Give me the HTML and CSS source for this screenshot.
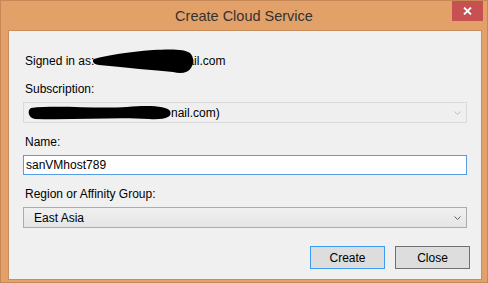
FILE: index.html
```html
<!DOCTYPE html>
<html lang="en">
<head>
    <meta charset="UTF-8">
    <meta name="viewport" content="width=device-width, initial-scale=1.0">
    <title>Create Cloud Service</title>
    <link rel="stylesheet" href="styles.css">
</head>
<body>
    <div class="window">
        <div class="titlebar">
            <span></span>
            <span class="title">Create Cloud Service</span>
            <button class="close-x" title="Close">
                <svg width="9" height="8" viewBox="0 0 9 8"><path d="M1 0.5 L8 7.5 M8 0.5 L1 7.5" stroke="#fff" stroke-width="1.8"/></svg>
            </button>
        </div>
        <div class="client">
            <div class="signed">
                <span>Signed in as:</span>
                <svg class="blob blob-signed" width="101" height="25" viewBox="0 0 101 25">
                    <path d="M1 10 C15 6 35 3 60 1 C78 0 92 0 97 4 C101 8 101 14 98 19 C95 24 88 25 80 23 C60 21 35 19 6 16 C-1 15 -1 11 1 10 Z" fill="#000"/>
                </svg>
                <span>ail.com</span>
            </div>

            <div class="field">
                <label>Subscription:</label>
                <div class="combo disabled">
                    <svg class="blob blob-sub" width="146" height="16" viewBox="0 0 146 16">
                        <path d="M4 3 C30 0 70 4 100 2 C122 0 140 1 143 6 C146 12 138 15 122 14 C90 12 50 15 8 14 C1 13 0 5 4 3 Z" fill="#000"/>
                    </svg>
                    <span class="combo-text">nail.com)</span>
                    <svg class="chev" width="7" height="4" viewBox="0 0 7 4"><path d="M0.5 0.5 L3.5 3.5 L6.5 0.5" fill="none" stroke="#bcbcbc"/></svg>
                </div>
            </div>

            <div class="field">
                <label for="name">Name:</label>
                <input id="name" class="textbox" type="text" value="sanVMhost789">
            </div>

            <div class="field">
                <label>Region or Affinity Group:</label>
                <div class="combo">
                    <span class="combo-text region">East Asia</span>
                    <svg class="chev" width="7" height="4" viewBox="0 0 7 4"><path d="M0.5 0.5 L3.5 3.5 L6.5 0.5" fill="none" stroke="#606060"/></svg>
                </div>
            </div>

            <div class="buttons">
                <button class="btn default">Create</button>
                <button class="btn">Close</button>
            </div>
        </div>
    </div>
</body>
</html>
```

FILE: styles.css
```css
body {
    margin: 0;
    padding: 0;
    font-family: "Liberation Sans", Arial, sans-serif;
    font-size: 12px;
    color: #000;
}
.window {
    width: 488px;
    height: 283px;
    box-sizing: border-box;
    background-color: #e2a168;
    border: 1px solid #c68856;
    display: flex;
    flex-direction: column;
}
.titlebar {
    height: 29px;
    display: grid;
    grid-template-columns: 1fr auto 1fr;
    align-items: start;
}
.title {
    font-family: "Liberation Sans", Arial, sans-serif;
    font-size: 14.5px;
    color: #333;
    padding-top: 7px;
}
.close-x {
    justify-self: end;
    width: 31px;
    height: 20px;
    margin-right: 4px;
    border: 0;
    padding: 0;
    background-color: #c75050;
    display: flex;
    align-items: center;
    justify-content: center;
}
.client {
    flex-grow: 1;
    margin: 0 5px 2px 7px;
    background-color: #f0f0f0;
    border: 1px solid #c98d5c;
    padding: 0 14px;
    display: flex;
    flex-direction: column;
}
.signed {
    margin-top: 17px;
    height: 25px;
    display: flex;
    align-items: center;
    padding-left: 2px;
}
.blob-signed {
    margin-left: -1px;
    margin-right: -7px;
    position: relative;
    top: 1px;
}
.field {
    display: flex;
    flex-direction: column;
}
.field label {
    line-height: 16px;
    padding-left: 2px;
    margin-bottom: 5px;
}
.signed + .field {
    margin-top: 8px;
}
.field + .field {
    margin-top: 11px;
}
.combo {
    height: 21px;
    box-sizing: border-box;
    border: 1px solid #acacac;
    background: linear-gradient(#f0f0f0, #e5e5e5);
    display: flex;
    align-items: center;
    padding: 0 5px 0 3px;
}
.combo.disabled {
    border-color: #d9d9d9;
    background: #efefef;
}
.combo-text {
    flex-grow: 1;
}
.combo-text.region {
    padding-left: 7px;
}
.blob-sub {
    margin-right: -2px;
}
.textbox {
    height: 20px;
    box-sizing: border-box;
    border: 1px solid #569de5;
    padding: 0 2px;
    margin: 0;
    font-family: inherit;
    font-size: 12px;
    color: #000;
    outline: none;
}
.buttons {
    display: flex;
    justify-content: flex-end;
    gap: 10px;
    margin-top: 18px;
    margin-right: -3px;
}
.btn {
    width: 75px;
    height: 23px;
    border: 1px solid #707070;
    background-color: #dddddd;
    font-family: inherit;
    font-size: 12px;
    color: #000;
    padding: 0;
}
.btn.default {
    border-color: #3c9cf0;
}
```
